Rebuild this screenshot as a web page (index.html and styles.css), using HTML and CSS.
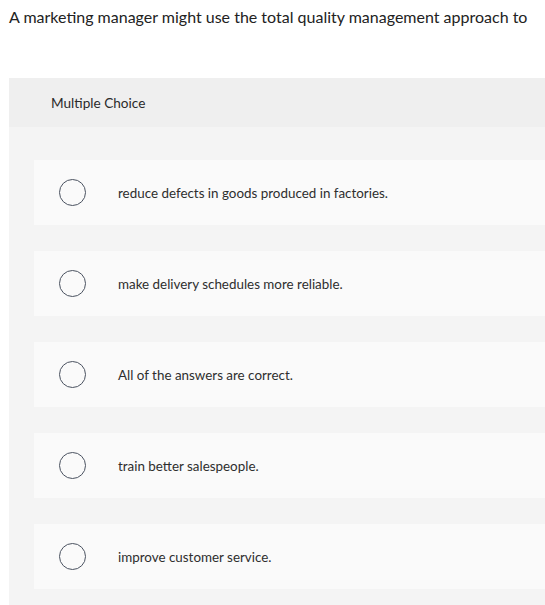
FILE: index.html
```html
<!DOCTYPE html>
<html>
<head>
<meta charset="utf-8">
<link rel="stylesheet" href="styles.css">
</head>
<body>
<p class="question">A marketing manager might use the total quality management approach to</p>
<div class="panel">
  <div class="panel-head">Multiple Choice</div>
  <div class="panel-body">
    <div class="option"><span class="radio"></span><span class="label">reduce defects in goods produced in factories.</span></div>
    <div class="option"><span class="radio"></span><span class="label">make delivery schedules more reliable.</span></div>
    <div class="option"><span class="radio"></span><span class="label">All of the answers are correct.</span></div>
    <div class="option"><span class="radio"></span><span class="label">train better salespeople.</span></div>
    <div class="option"><span class="radio"></span><span class="label">improve customer service.</span></div>
  </div>
</div>
</body>
</html>
```
FILE: styles.css
```css
html, body {
  margin: 0;
  padding: 0;
  background: #ffffff;
  overflow: hidden;
}
body {
  font-family: "Lato", "Open Sans", sans-serif;
  color: #222;
}
.question {
  margin: 0;
  padding: 7px 0 0 9px;
  font-size: 16px;
  line-height: 20px;
  color: #222;
}
.panel {
  margin: 51px 0 0 9px;
}
.panel-head {
  background: #efefef;
  height: 49px;
  display: flex;
  align-items: center;
  padding-left: 42px;
  font-size: 13.6px;
  color: #2a2a2a;
}
.panel-body {
  background: #f4f4f4;
  padding: 33px 0 20px 25px;
  display: flex;
  flex-direction: column;
  gap: 26px;
}
.option {
  background: #fafafa;
  height: 65px;
  display: flex;
  align-items: center;
  padding-left: 25px;
}
.radio {
  width: 25px;
  height: 25px;
  border: 1.3px solid #4a5260;
  border-radius: 50%;
  flex: none;
}
.label {
  margin-left: 32px;
  font-size: 13.4px;
  color: #2e2e2e;
}
```
